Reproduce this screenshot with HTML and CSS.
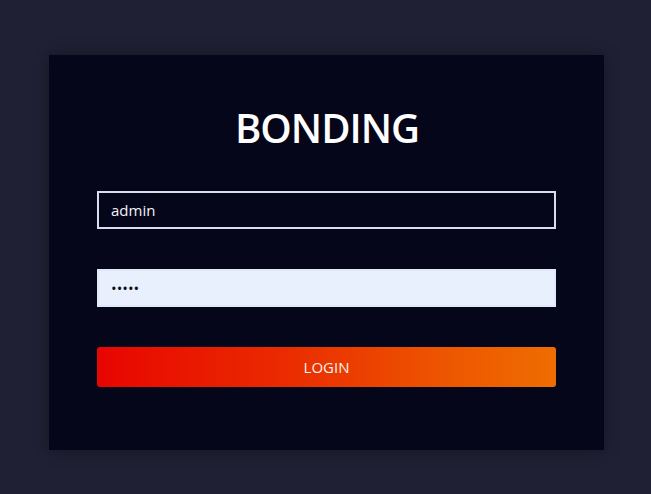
FILE: index.html
```html
<!DOCTYPE html>
<html>
<head>
<meta charset="utf-8">
<link rel="stylesheet" href="styles.css">
</head>
<body>
<main class="page">
  <form class="card">
    <h1 class="title">BONDING</h1>
    <input class="field field-user" type="text" value="admin">
    <input class="field field-pass" type="password" value="admin">
    <button class="login" type="button">LOGIN</button>
  </form>
</main>
</body>
</html>
```
FILE: styles.css
```css
html, body {
  margin: 0;
  padding: 0;
  background: #1f2033;
  font-family: "Open Sans", "Noto Sans", sans-serif;
}
.page {
  width: 651px;
  height: 494px;
  box-sizing: border-box;
  padding: 55px 0 0 49px;
}
.card {
  width: 555px;
  height: 395px;
  box-sizing: border-box;
  background: #05061a;
  box-shadow: 0 0 14px rgba(0, 0, 0, 0.35);
  padding: 49px 48px 0 48px;
  display: flex;
  flex-direction: column;
}
.title {
  margin: 0 0 39px 0;
  height: 48px;
  font-size: 40px;
  line-height: 48px;
  font-weight: 600;
  color: #ffffff;
  text-align: center;
  letter-spacing: -1px;
  padding-left: 1px;
}
.field {
  display: block;
  width: 459px;
  height: 38px;
  box-sizing: border-box;
  margin: 0 0 40px 0;
  padding: 0 12px;
  font-family: "Open Sans", "Noto Sans", sans-serif;
  font-size: 15px;
  outline: none;
}
.field-user {
  background: #05061a;
  border: 2px solid #dcdcf0;
  color: #f2f2f8;
}
.field-pass {
  background: #e8f0fe;
  border: 2px solid #e2e8f6;
  color: #111;
  font-size: 15px;
  letter-spacing: 0px;
}
.login {
  display: block;
  width: 459px;
  height: 40px;
  border: none;
  border-radius: 3px;
  background: linear-gradient(90deg, #e80500 0%, #ea2a00 40%, #ed5500 75%, #ef6d00 100%);
  color: #f7f2ee;
  font-family: "Open Sans", "Noto Sans", sans-serif;
  font-size: 15px;
  padding: 0;
  cursor: pointer;
}
```
